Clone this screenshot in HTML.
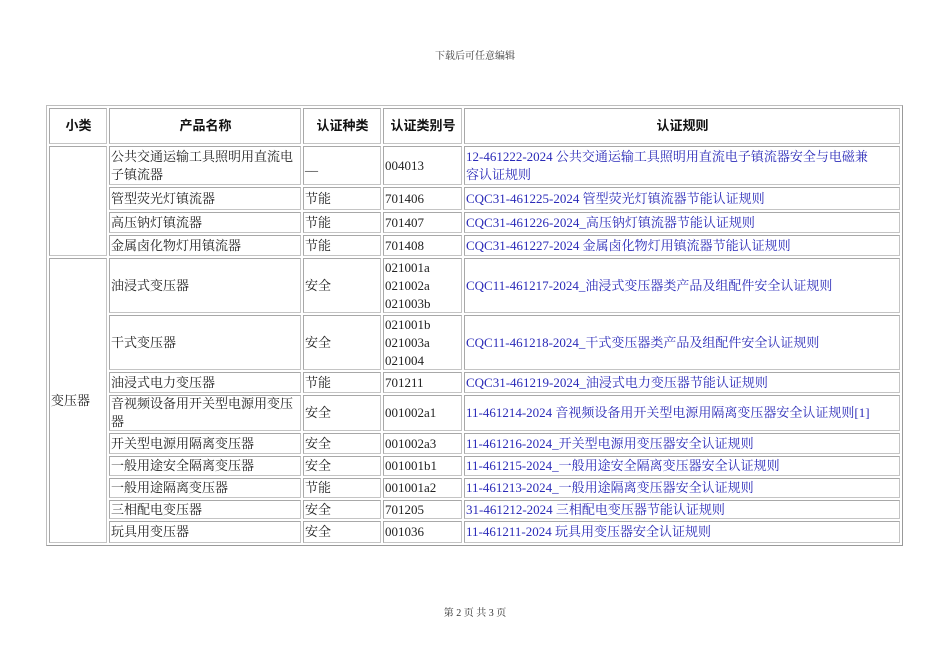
<!DOCTYPE html>
<html><head><meta charset="utf-8"><style>
body{margin:0;width:950px;height:672px;background:#fff;position:relative;font-family:"Liberation Serif","Noto Serif CJK SC",serif;font-size:13px;color:#222;overflow:hidden}
.c{position:absolute;box-sizing:border-box;border:1px solid #c4c4c4;border-left-color:#a8a8a8;border-top-color:#a8a8a8;display:flex;align-items:center;line-height:18px;padding-left:1px;overflow:hidden}
.h{justify-content:center;font-family:"Liberation Sans","Noto Sans CJK SC",sans-serif;font-weight:bold;font-size:13px;color:#111}
.l{color:#2a2ab8}
.t{position:absolute;font-size:10px;width:950px;text-align:center;color:#333}
#tb{position:absolute;left:46px;top:105px;width:857px;height:441px;border:1px solid #bdbdbd;border-right-color:#999;border-bottom-color:#999;box-sizing:border-box}
</style></head><body>
<div class="t" style="top:47px">下载后可任意编辑</div>
<div class="t" style="top:604px">第 2 页 共 3 页</div>
<div id="tb"></div>
<div class="c h" style="left:49px;top:108px;width:58px;height:36px">小类</div>
<div class="c h" style="left:109px;top:108px;width:192px;height:36px">产品名称</div>
<div class="c h" style="left:303px;top:108px;width:78px;height:36px">认证种类</div>
<div class="c h" style="left:383px;top:108px;width:79px;height:36px">认证类别号</div>
<div class="c h" style="left:464px;top:108px;width:436px;height:36px">认证规则</div>

<div class="c" style="left:49px;top:146px;width:58px;height:110px"></div>
<div class="c" style="left:49px;top:258px;width:58px;height:285px">变压器</div>

<div class="c" style="left:109px;top:146px;width:192px;height:39px">公共交通运输工具照明用直流电子镇流器</div>
<div class="c" style="left:303px;top:146px;width:78px;height:39px">__</div>
<div class="c" style="left:383px;top:146px;width:79px;height:39px">004013</div>
<div class="c l" style="left:464px;top:146px;width:436px;height:39px;padding-right:20px">12-461222-2024 公共交通运输工具照明用直流电子镇流器安全与电磁兼容认证规则</div>

<div class="c" style="left:109px;top:187px;width:192px;height:23px">管型荧光灯镇流器</div>
<div class="c" style="left:303px;top:187px;width:78px;height:23px">节能</div>
<div class="c" style="left:383px;top:187px;width:79px;height:23px">701406</div>
<div class="c l" style="left:464px;top:187px;width:436px;height:23px">CQC31-461225-2024 管型荧光灯镇流器节能认证规则</div>

<div class="c" style="left:109px;top:212px;width:192px;height:21px">高压钠灯镇流器</div>
<div class="c" style="left:303px;top:212px;width:78px;height:21px">节能</div>
<div class="c" style="left:383px;top:212px;width:79px;height:21px">701407</div>
<div class="c l" style="left:464px;top:212px;width:436px;height:21px">CQC31-461226-2024_高压钠灯镇流器节能认证规则</div>

<div class="c" style="left:109px;top:235px;width:192px;height:21px">金属卤化物灯用镇流器</div>
<div class="c" style="left:303px;top:235px;width:78px;height:21px">节能</div>
<div class="c" style="left:383px;top:235px;width:79px;height:21px">701408</div>
<div class="c l" style="left:464px;top:235px;width:436px;height:21px">CQC31-461227-2024 金属卤化物灯用镇流器节能认证规则</div>

<div class="c" style="left:109px;top:258px;width:192px;height:55px">油浸式变压器</div>
<div class="c" style="left:303px;top:258px;width:78px;height:55px">安全</div>
<div class="c" style="left:383px;top:258px;width:79px;height:55px">021001a<br>021002a<br>021003b</div>
<div class="c l" style="left:464px;top:258px;width:436px;height:55px">CQC11-461217-2024_油浸式变压器类产品及组配件安全认证规则</div>

<div class="c" style="left:109px;top:315px;width:192px;height:55px">干式变压器</div>
<div class="c" style="left:303px;top:315px;width:78px;height:55px">安全</div>
<div class="c" style="left:383px;top:315px;width:79px;height:55px">021001b<br>021003a<br>021004</div>
<div class="c l" style="left:464px;top:315px;width:436px;height:55px">CQC11-461218-2024_干式变压器类产品及组配件安全认证规则</div>

<div class="c" style="left:109px;top:372px;width:192px;height:21px">油浸式电力变压器</div>
<div class="c" style="left:303px;top:372px;width:78px;height:21px">节能</div>
<div class="c" style="left:383px;top:372px;width:79px;height:21px">701211</div>
<div class="c l" style="left:464px;top:372px;width:436px;height:21px">CQC31-461219-2024_油浸式电力变压器节能认证规则</div>

<div class="c" style="left:109px;top:395px;width:192px;height:36px">音视频设备用开关型电源用变压器</div>
<div class="c" style="left:303px;top:395px;width:78px;height:36px">安全</div>
<div class="c" style="left:383px;top:395px;width:79px;height:36px">001002a1</div>
<div class="c l" style="left:464px;top:395px;width:436px;height:36px">11-461214-2024 音视频设备用开关型电源用隔离变压器安全认证规则[1]</div>

<div class="c" style="left:109px;top:433px;width:192px;height:21px">开关型电源用隔离变压器</div>
<div class="c" style="left:303px;top:433px;width:78px;height:21px">安全</div>
<div class="c" style="left:383px;top:433px;width:79px;height:21px">001002a3</div>
<div class="c l" style="left:464px;top:433px;width:436px;height:21px">11-461216-2024_开关型电源用变压器安全认证规则</div>

<div class="c" style="left:109px;top:456px;width:192px;height:20px">一般用途安全隔离变压器</div>
<div class="c" style="left:303px;top:456px;width:78px;height:20px">安全</div>
<div class="c" style="left:383px;top:456px;width:79px;height:20px">001001b1</div>
<div class="c l" style="left:464px;top:456px;width:436px;height:20px">11-461215-2024_一般用途安全隔离变压器安全认证规则</div>

<div class="c" style="left:109px;top:478px;width:192px;height:20px">一般用途隔离变压器</div>
<div class="c" style="left:303px;top:478px;width:78px;height:20px">节能</div>
<div class="c" style="left:383px;top:478px;width:79px;height:20px">001001a2</div>
<div class="c l" style="left:464px;top:478px;width:436px;height:20px">11-461213-2024_一般用途隔离变压器安全认证规则</div>

<div class="c" style="left:109px;top:500px;width:192px;height:19px">三相配电变压器</div>
<div class="c" style="left:303px;top:500px;width:78px;height:19px">安全</div>
<div class="c" style="left:383px;top:500px;width:79px;height:19px">701205</div>
<div class="c l" style="left:464px;top:500px;width:436px;height:19px">31-461212-2024 三相配电变压器节能认证规则</div>

<div class="c" style="left:109px;top:521px;width:192px;height:22px">玩具用变压器</div>
<div class="c" style="left:303px;top:521px;width:78px;height:22px">安全</div>
<div class="c" style="left:383px;top:521px;width:79px;height:22px">001036</div>
<div class="c l" style="left:464px;top:521px;width:436px;height:22px">11-461211-2024 玩具用变压器安全认证规则</div>
</body></html>
